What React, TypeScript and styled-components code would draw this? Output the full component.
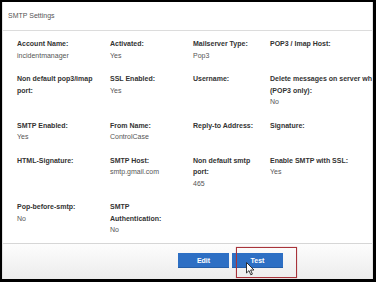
import React from "react";
import styled, { createGlobalStyle } from "styled-components";

const Global = createGlobalStyle`
  html, body { margin: 0; padding: 0; background: #000; }
  body { font-family: "Liberation Sans", Arial, sans-serif; }
`;

const Frame = styled.div`
  width: 376px;
  height: 282px;
  box-sizing: border-box;
  background: #000;
  padding: 2px 3px 3px 2px;
  overflow: hidden;
`;

const Panel = styled.div`
  height: 100%;
  background: #fff;
  border-left: 1px solid #e2e2e2;
  border-right: 1px solid #e2e2e2;
  box-sizing: border-box;
  display: flex;
  flex-direction: column;
  overflow: hidden;
`;

const Header = styled.div`
  height: 29px;
  box-sizing: border-box;
  display: flex;
  align-items: center;
  padding: 0 0 2px 5px;
  border-bottom: 1px solid #dcdcdc;
  font-size: 7px;
  color: #555;
`;

const Grid = styled.div`
  display: grid;
  grid-template-columns: 93px 83px 77px 170px;
  row-gap: 11.5px;
  padding: 7px 0 7px 14px;
  line-height: 11.5px;
  font-size: 7px;
  flex: 1;
`;

const Cell = styled.div`
  display: flex;
  flex-direction: column;
  white-space: nowrap;
`;

const Label = styled.div`
  font-weight: bold;
  color: #333;
`;

const Value = styled.div`
  color: #555;
`;

const Footer = styled.div`
  height: 36px;
  box-sizing: border-box;
  border-top: 1px solid #d6d6d6;
  background: linear-gradient(#fdfdfd, #ececec);
  display: flex;
  align-items: flex-start;
  gap: 3px;
  padding: 9px 0 0 175px;
`;

const Button = styled.div`
  width: 51px;
  height: 15px;
  background: #2d6fc4;
  color: #fff;
  font-size: 7px;
  font-weight: bold;
  display: flex;
  align-items: center;
  justify-content: center;
  box-shadow: inset 0 -1px 0 #245ea8;
`;

const TestWrap = styled.div`
  position: relative;
`;

const Highlight = styled.div`
  position: absolute;
  left: 4px;
  top: -6px;
  width: 61px;
  height: 31px;
  box-sizing: border-box;
  border: 1.5px solid #a8333a;
  box-shadow: 0 0 1px rgba(168, 51, 58, 0.5);
`;

const Cursor = styled.svg`
  position: absolute;
  left: 14px;
  top: 9px;
`;

type Item = { label: React.ReactNode; value?: string };

const rows: (Item | null)[][] = [
  [
    { label: "Account Name:", value: "incidentmanager" },
    { label: "Activated:", value: "Yes" },
    { label: "Mailserver Type:", value: "Pop3" },
    { label: "POP3 / Imap Host:" },
  ],
  [
    { label: <>Non default pop3/imap<br />port:</> },
    { label: "SSL Enabled:", value: "Yes" },
    { label: "Username:" },
    { label: <>Delete messages on server when retrieved<br />(POP3 only):</>, value: "No" },
  ],
  [
    { label: "SMTP Enabled:", value: "Yes" },
    { label: "From Name:", value: "ControlCase" },
    { label: "Reply-to Address:" },
    { label: "Signature:" },
  ],
  [
    { label: "HTML-Signature:" },
    { label: "SMTP Host:", value: "smtp.gmail.com" },
    { label: <>Non default smtp<br />port:</>, value: "465" },
    { label: "Enable SMTP with SSL:", value: "Yes" },
  ],
  [
    { label: "Pop-before-smtp:", value: "No" },
    { label: <>SMTP<br />Authentication:</>, value: "No" },
    null,
    null,
  ],
];

export default function App() {
  return (
    <>
      <Global />
      <Frame>
        <Panel>
          <Header>SMTP Settings</Header>
          <Grid>
            {rows.flatMap((row, r) =>
              row.map((item, c) => (
                <Cell key={`${r}-${c}`}>
                  {item && (
                    <>
                      <Label>{item.label}</Label>
                      {item.value && <Value>{item.value}</Value>}
                    </>
                  )}
                </Cell>
              ))
            )}
          </Grid>
          <Footer>
            <Button>Edit</Button>
            <TestWrap>
              <Button>Test</Button>
              <Highlight />
              <Cursor width="9" height="14" viewBox="0 0 9 14">
                <path
                  d="M0.5 0.5 L0.5 11 L3 8.6 L4.8 12.8 L6.4 12.1 L4.6 8 L8 8 Z"
                  fill="#fff"
                  stroke="#222"
                  strokeWidth="0.9"
                  strokeLinejoin="round"
                />
              </Cursor>
            </TestWrap>
          </Footer>
        </Panel>
      </Frame>
    </>
  );
}
